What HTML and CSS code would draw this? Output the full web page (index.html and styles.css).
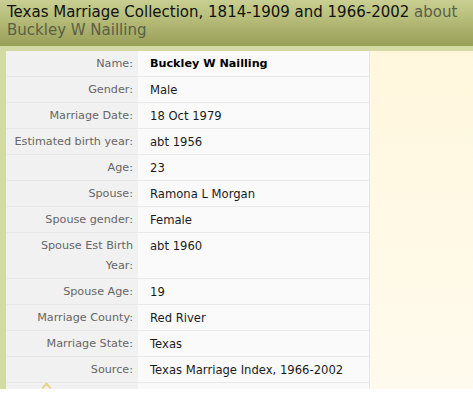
FILE: index.html
```html
<!DOCTYPE html>
<html>
<head>
<meta charset="utf-8">
<link rel="stylesheet" href="styles.css">
</head>
<body>
<div class="header">
  <h1 class="title"><span class="coll">Texas Marriage Collection, 1814-1909 and 1966-2002</span> <span class="about">about Buckley W Nailling</span></h1>
</div>
<div class="body">
  <div class="main">
    <table class="record">
      <tr><th>Name:</th><td class="strong">Buckley W Nailling</td></tr>
      <tr><th>Gender:</th><td>Male</td></tr>
      <tr><th>Marriage Date:</th><td>18 Oct 1979</td></tr>
      <tr><th>Estimated birth year:</th><td>abt 1956</td></tr>
      <tr><th>Age:</th><td>23</td></tr>
      <tr><th>Spouse:</th><td>Ramona L Morgan</td></tr>
      <tr><th>Spouse gender:</th><td>Female</td></tr>
      <tr><th>Spouse Est Birth<br>Year:</th><td>abt 1960</td></tr>
      <tr><th>Spouse Age:</th><td>19</td></tr>
      <tr><th>Marriage County:</th><td>Red River</td></tr>
      <tr><th>Marriage State:</th><td>Texas</td></tr>
      <tr><th>Source:</th><td>Texas Marriage Index, 1966-2002</td></tr>
      <tr class="more"><th><span class="mark"></span></th><td>&nbsp;</td></tr>
    </table>
  </div>
  <div class="side"></div>
</div>
</body>
</html>
```
FILE: styles.css
```css
html, body { margin: 0; padding: 0; background: #fff; }
body { width: 473px; font-family: "DejaVu Sans", Verdana, sans-serif; }
.header {
  height: 46px;
  box-sizing: border-box;
  padding: 3px 0 0 7px;
  background: linear-gradient(to bottom, #c9cf91 0%, #b2b874 50%, #989f58 100%);
}
.title {
  margin: 0;
  font-weight: normal;
  font-size: 15px;
  line-height: 18px;
  color: #111;
}
.about { color: #5c5e45; }
.body {
  display: flex;
  height: 343px;
  overflow: hidden;
  box-sizing: border-box;
  padding: 5px 0 0 6px;
  background: #d3daa3;
}
.main {
  width: 363px;
  background: #fafafa;
  border-right: 1px solid #e6e6e6;
}
.side {
  flex: 1;
  background: linear-gradient(to bottom, #fff7dd, #fffaed);
}
.record {
  width: 100%;
  table-layout: fixed;
  border-collapse: collapse;
  font-size: 11.2px;
  line-height: 20px;
}
.record th, .record td {
  border-bottom: 1px solid #e8e8e8;
  padding: 3px 0 2px 0;
  vertical-align: top;
}
.record th {
  width: 121px;
  background: #f1f1f1;
  color: #666;
  font-weight: normal;
  text-align: right;
  white-space: nowrap;
  padding-left: 6px;
  padding-right: 5px;
}
.record td {
  color: #1a1a1a;
  font-size: 11.6px;
  padding-left: 12px;
}
.record td.strong { font-weight: bold; color: #000; font-size: 11.2px; }
.record .more th { padding-top: 0; text-align: left; }
.mark {
  display: block;
  width: 5px; height: 5px;
  margin: 1px 0 0 31px;
  border-top: 2px solid #e6d48a;
  border-left: 2px solid #e6d48a;
  transform: rotate(45deg);
}
```
